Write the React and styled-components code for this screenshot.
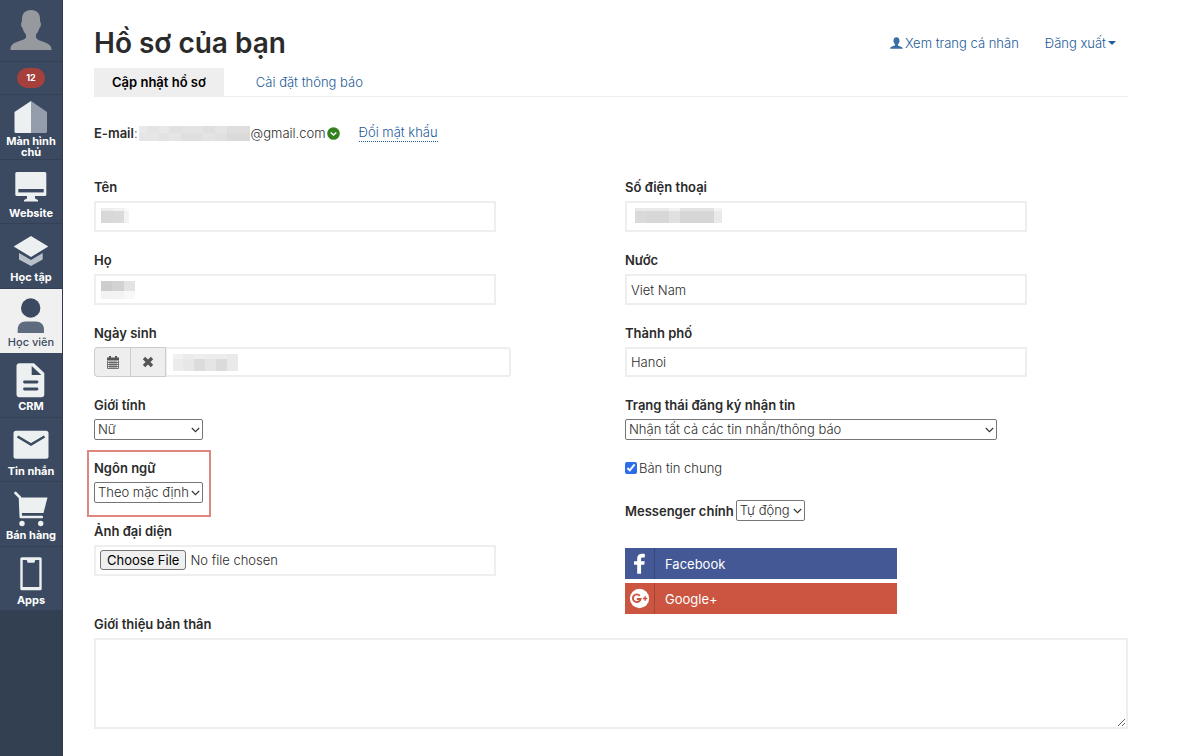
import { useState } from 'react';
import styled, { createGlobalStyle, css } from 'styled-components';

const GlobalStyle = createGlobalStyle`
  *, *::before, *::after {
    box-sizing: border-box;
  }
  body {
    margin: 0;
    background: #fff;
    color: #2b2b2b;
    font-family: Inter, 'Liberation Sans', sans-serif;
    font-size: 13px;
    font-weight: 300;
    line-height: 20px;
  }
  button, input, select, textarea {
    font: inherit;
    color: inherit;
  }
  a {
    color: #245c98;
    text-decoration: none;
  }
`;

const Page = styled.div`
  display: flex;
  min-height: 100vh;
`;

const Sidebar = styled.nav`
  flex: 0 0 63px;
  background: #334051;
  border-right: 1px solid #2f3b4c;
`;

const Menu = styled.ul`
  margin: 0;
  padding: 0;
  list-style: none;
`;

const MenuItem = styled.li`
  height: 64px;
  background: #3b4a60;
  border-bottom: 1px solid #344155;

  &:nth-child(odd) {
    height: 65px;
  }
  ${(props) =>
    props.$active &&
    css`
      background: #f0f0f0;
      border-color: #f0f0f0;
    `}
`;

const MenuLink = styled.a`
  display: flex;
  flex-direction: column;
  align-items: center;
  padding-top: 6px;
  color: ${(props) => (props.$active ? '#3b4a60' : '#fff')};
  font-size: 11px;
  font-weight: ${(props) => (props.$active ? 500 : 700)};
  line-height: 11px;
  text-align: center;
`;

const AvatarBox = styled.a`
  display: flex;
  justify-content: center;
  height: 62px;
  padding-top: 9px;
  background: #3b4a60;
  border-bottom: 1px solid #344155;
`;

const BadgeBox = styled.div`
  display: flex;
  align-items: center;
  justify-content: center;
  height: 33px;
  background: #3b4a60;
  border-bottom: 1px solid #344155;
`;

const Badge = styled.a`
  padding: 0 9px;
  border-radius: 10px;
  background: #a6403d;
  color: #fff;
  font-size: 9px;
  font-weight: 700;
  line-height: 20px;
`;

const Main = styled.main`
  flex: 1;
  min-width: 0;
  padding: 24px 72px 28px 31px;
`;

const Header = styled.header`
  display: flex;
  align-items: center;
  justify-content: space-between;
  height: 38px;
`;

const Title = styled.h1`
  margin: 0;
  font-size: 28px;
  font-weight: 600;
  line-height: 38px;
`;

const UserLinks = styled.div`
  display: flex;
  gap: 26px;
  padding-right: 12px;

  a {
    display: flex;
    align-items: center;
    gap: 2px;
  }
`;

const Caret = styled.span`
  border: 4px solid transparent;
  border-top-color: currentColor;
  border-bottom: 0;
`;

const Tabs = styled.nav`
  display: flex;
  margin-top: 6px;
  border-bottom: 1px solid #eee;
`;

const Tab = styled.a`
  padding: 4px 18px;
  margin-right: 14px;
  ${(props) =>
    props.$active &&
    css`
      background: #eee;
      color: #000;
      font-weight: 600;
    `}
`;

const EmailRow = styled.div`
  display: flex;
  align-items: center;
  gap: 1px;
  margin: 26px 0 34px;

  b {
    font-weight: 600;
  }
`;

const PasswordLink = styled.a`
  margin-left: 18px;
  line-height: 17px;
  border-bottom: 1px dotted #245c98;
`;

const Columns = styled.div`
  display: grid;
  grid-template-columns: 1fr 1fr;
  gap: 28px;
`;

const Field = styled.div`
  position: relative;
  margin-bottom: 18px;
`;

const Label = styled.label`
  display: block;
  margin-bottom: 4px;
  font-weight: 600;
`;

const Control = styled.div`
  position: relative;
  width: 80%;
`;

const TextInput = styled.input`
  display: block;
  width: 100%;
  height: ${(props) => (props.$short ? 30 : 31)}px;
  padding: 0 4px;
  border: 2px solid #eee;
  background: #fff;
`;

const DateGroup = styled.div`
  display: flex;
  width: 83%;
`;

const DateButton = styled.button`
  display: flex;
  align-items: center;
  justify-content: center;
  width: 36px;
  padding: 0;
  border: 1px solid #ccc;
  background: #eee;
  color: #555;

  &:first-child {
    border-right: 0;
    border-radius: 4px 0 0 4px;
  }
`;

const DateInputBox = styled.div`
  position: relative;
  flex: 1;

  input {
    border-left-width: 1px;
    border-radius: 0 3px 3px 0;
  }
`;

const SelectBox = styled.div`
  position: relative;
  width: ${(props) => props.$width};

  svg {
    position: absolute;
    top: 8px;
    right: 3px;
    pointer-events: none;
  }
`;

const NativeSelect = styled.select`
  display: block;
  width: 100%;
  height: 21px;
  padding: 0 12px 0 3px;
  border: 1px solid #767676;
  border-radius: 2px;
  background: #fff;
  line-height: 19px;
  appearance: none;
`;

const FileInput = styled.input`
  display: block;
  width: 80%;
  height: 31px;
  padding: 3px 4px;
  border: 2px solid #eee;
  line-height: 20px;

  &::file-selector-button {
    height: 20px;
    margin-right: 4px;
    padding: 0 6px;
    border: 1px solid #767676;
    border-radius: 3px;
    background: #efefef;
    color: #000;
    font: inherit;
    font-weight: 400;
    line-height: 18px;
  }
`;

// red frame drawn over the language field
const Highlight = styled.span`
  position: absolute;
  top: -8px;
  left: -7px;
  width: 124px;
  height: 67px;
  border: 2px solid #e08681;
  pointer-events: none;
`;

const CheckRow = styled.label`
  display: flex;
  align-items: center;
  gap: 2px;
  margin-bottom: 22px;

  input {
    width: 12px;
    height: 12px;
    margin: 0;
    accent-color: #2b6de8;
  }
`;

const InlineField = styled.div`
  display: flex;
  align-items: center;
  gap: 2px;
  margin-bottom: 27px;

  label {
    margin: 0;
  }
`;

const SocialList = styled.div`
  display: flex;
  flex-direction: column;
  gap: 4px;
`;

const SocialButton = styled.button`
  display: flex;
  align-items: center;
  width: 272px;
  height: 31px;
  padding: 0;
  border: 0;
  background: ${(props) => props.$color};
  color: #fff;
  text-align: left;

  svg {
    flex: none;
    border-right: 1px solid rgba(0, 0, 0, 0.18);
  }
  span {
    padding-left: 10px;
    font-weight: 400;
  }
`;

const Bio = styled.textarea`
  display: block;
  width: 100%;
  height: 91px;
  padding: 6px;
  border: 2px solid #eee;
  resize: both;
`;

const MaskBox = styled.span`
  display: flex;
  ${(props) =>
    props.$over &&
    css`
      position: absolute;
      top: 7px;
      left: 7px;
    `}
`;

// each row is a list of [width, shade] cells
const Mask = ({ rows, over }) => {
  const width = Math.max(...rows.map((r) => r.cells.reduce((sum, c) => sum + c[0], 0)));
  const height = rows.reduce((sum, r) => sum + r.height, 0);
  let y = 0;
  return (
    <MaskBox $over={over}>
      <svg width={width} height={height} shapeRendering="crispEdges" aria-hidden="true">
        {rows.map((row, i) => {
          const top = y;
          let x = 0;
          y += row.height;
          return row.cells.map(([w, fill], j) => {
            const left = x;
            x += w;
            return <rect key={`${i}-${j}`} x={left} y={top} width={w} height={row.height} fill={fill} />;
          });
        })}
      </svg>
    </MaskBox>
  );
};

const emailMask = [
  { height: 7, cells: [[8, '#e9e9e9'], [12, '#e4e4e4'], [10, '#e8e8e8'], [12, '#e1e1e1'], [22, '#e3e3e3'], [12, '#dfdfdf'], [12, '#e4e4e4'], [23, '#dedede']] },
  { height: 8, cells: [[8, '#e5e5e5'], [12, '#e6e6e6'], [10, '#e2e2e2'], [12, '#e5e5e5'], [22, '#dfdfdf'], [12, '#e3e3e3'], [12, '#e0e0e0'], [23, '#dadada']] },
];
const firstNameMask = [
  { height: 3, cells: [[12, '#ececec'], [12, '#f1f1f1'], [4, '#fafafa']] },
  { height: 12, cells: [[12, '#d8d8d8'], [11, '#dadada'], [5, '#f3f3f3']] },
];
const lastNameMask = [
  { height: 10, cells: [[11, '#cdcdcd'], [12, '#d2d2d2'], [11, '#e3e3e3']] },
  { height: 8, cells: [[11, '#f2f2f2'], [12, '#f3f3f3'], [11, '#f8f8f8']] },
];
const dateMask = [
  { height: 5, cells: [[10, '#f1f1f1'], [11, '#ebebeb'], [11, '#efefef'], [22, '#ececec'], [11, '#e9e9e9']] },
  { height: 12, cells: [[10, '#ececec'], [11, '#e7e7e7'], [11, '#dcdcdc'], [11, '#e5e5e5'], [11, '#dbdbdb'], [11, '#e9e9e9']] },
];
const phoneMask = [
  { height: 3, cells: [[3, '#fff'], [34, '#e9e9e9'], [11, '#f2f2f2'], [34, '#e3e3e3'], [8, '#f3f3f3']] },
  { height: 12, cells: [[3, '#fff'], [12, '#dadada'], [22, '#d7d7d7'], [11, '#e0e0e0'], [34, '#d6d6d6'], [8, '#eaeaea']] },
];

const HomeIcon = () => (
  <svg width="36" height="35" viewBox="0 0 36 35">
    <path d="M18 0v32H3a1.500 1.500 0 0 1-1.500-1.500V11z" fill="#ecf0f1" />
    <path d="M18 0v32h14.500A1.500 1.500 0 0 0 34 30.500V11z" fill="#949dac" />
  </svg>
);

const WebsiteIcon = () => (
  <svg width="36" height="42" viewBox="0 0 36 42" fill="#ecf0f1">
    <rect x="2.300" y="6" width="31" height="24" rx="1.500" />
    <path d="M14 30h8v2.500l3 1.500v1.500H11V34l3-1.500z" />
    <rect x="5.300" y="23" width="25.400" height="3.400" fill="#3b4a60" />
  </svg>
);

const LearnIcon = () => (
  <svg width="36" height="42" viewBox="0 0 36 42">
    <path d="M6 23l12 7 11.700-7v6.500L18 36 6 29.500z" fill="#b9c0c9" />
    <path d="M18 6l17.300 10.500L18 27 .7 16.500z" fill="#ecf0f1" />
  </svg>
);

const StudentIcon = () => (
  <svg width="36" height="42" viewBox="0 0 36 42">
    <circle cx="17.700" cy="13" r="9.700" fill="#3b4a60" />
    <path d="M4.700 38v-3.500c0-5 3-8 8-8h10c5 0 8.300 3 8.300 8V38z" fill="#5f6b7f" />
  </svg>
);

const CrmIcon = () => (
  <svg width="36" height="42" viewBox="0 0 36 42">
    <path d="M6.500 4.300h14.500L31.300 14v21.300a3 3 0 0 1-3 3H6.500a3 3 0 0 1-3-3v-28a3 3 0 0 1 3-3z" fill="#ecf0f1" />
    <path d="M18.700 7v9h9.600z" fill="#3b4a60" />
    <path d="M11.500 23h12.500M11.500 30h12.500" stroke="#3b4a60" strokeWidth="2.800" strokeLinecap="round" />
  </svg>
);

const MailIcon = () => (
  <svg width="36" height="42" viewBox="0 0 36 42">
    <rect x=".5" y="6.700" width="35" height="28" rx="2.500" fill="#ecf0f1" />
    <path d="M4.500 12.500L18 20.500l13.500-8" fill="none" stroke="#3b4a60" strokeWidth="2.600" />
  </svg>
);

const CartIcon = () => (
  <svg width="36" height="42" viewBox="0 0 36 42" fill="#ecf0f1">
    <path d="M7 9.500h27.500L30.500 25H7.500z" />
    <path d="M2.500 5l4.500 4.500.8 19.500h21" fill="none" stroke="#ecf0f1" strokeWidth="2.600" strokeLinecap="round" strokeLinejoin="round" />
    <circle cx="9" cy="35.500" r="2.700" />
    <circle cx="27.700" cy="35.500" r="2.700" />
  </svg>
);

const AppsIcon = () => (
  <svg width="36" height="42" viewBox="0 0 36 42">
    <rect x="7.300" y="4.300" width="21.400" height="33" rx="1.500" fill="#ecf0f1" />
    <path d="M9.700 7h4l1 2.700h6.600l1-2.700h4v27H9.700z" fill="#3b4a60" />
  </svg>
);

const UserIcon = ({ width, height, color }) => (
  <svg width={width} height={height} viewBox="0 0 42 42" preserveAspectRatio="none" fill={color} aria-hidden="true">
    <path d="M21 1c6 0 9 3.500 9 9 0 2 .2 3 .8 4 .6 1.500-.3 4-1.300 5-.8 3-2 5-3.500 6.500v3c1 2.500 4 3 8 4.500 5 2 7.500 3.500 7.500 8V41H.5c0-5 2-6.500 7.500-8.500 4-1.500 7-2 8-4v-3c-1.500-1.500-2.700-3.500-3.500-6.500-1-1-1.900-3.500-1.300-5 .6-1 .8-2 .8-4 0-5.500 3-9 9-9z" />
  </svg>
);

const VerifiedIcon = () => (
  <svg width="13" height="13" viewBox="0 0 13 13" aria-hidden="true">
    <circle cx="6.500" cy="6.500" r="6.300" fill="#35801f" />
    <path d="M3.700 5.500l2.800 2.500 2.800-2.500" fill="none" stroke="#fff" strokeWidth="1.500" />
  </svg>
);

const CalendarIcon = () => (
  <svg width="12" height="13" viewBox="0 0 12 13" fill="none" stroke="#555" aria-hidden="true">
    <path d="M0 2.500h12M0 3.500h12M3 0v2M9 0v2" strokeWidth="2" />
    <path d="M.5 5v7.500h11V5M.5 6.500h11M.5 8.500h11M.5 10.500h11M3 5v7M5 5v7M7 5v7M9 5v7" strokeWidth="1" opacity=".8" />
  </svg>
);

const RemoveIcon = () => (
  <svg width="12" height="12" viewBox="0 0 12 12" aria-hidden="true">
    <path d="M2 2l8 8M10 2l-8 8" stroke="#555" strokeWidth="3.400" />
  </svg>
);

const FacebookIcon = () => (
  <svg width="30" height="31" viewBox="0 0 30 31" fill="#fff" aria-hidden="true">
    <path d="M20.500 5.800v3.400h-2.300c-1.200 0-1.600.6-1.600 1.600v2.400h3.800l-.5 3.500h-3.300V26h-4v-9.300H9.300v-3.500h3.300v-2.800c0-3.200 1.900-4.900 4.900-4.900 1.300 0 2.400.1 3 .3z" />
  </svg>
);

const GooglePlusIcon = () => (
  <svg width="30" height="31" viewBox="0 0 30 31" fill="none" aria-hidden="true">
    <circle cx="15" cy="15.500" r="10" fill="#fff" />
    <path d="M15.300 12.700a4 4 0 1 0 .8 3.300h-3.900" stroke="#cb5540" strokeWidth="2" />
    <path d="M20.800 13.300v4.600M18.500 15.600h4.600" stroke="#cb5540" strokeWidth="1.500" />
  </svg>
);

const menu = [
  { label: 'Màn hình chủ', icon: HomeIcon },
  { label: 'Website', icon: WebsiteIcon },
  { label: 'Học tập', icon: LearnIcon },
  { label: 'Học viên', icon: StudentIcon, active: true },
  { label: 'CRM', icon: CrmIcon },
  { label: 'Tin nhắn', icon: MailIcon },
  { label: 'Bán hàng', icon: CartIcon },
  { label: 'Apps', icon: AppsIcon },
];

const TextField = ({ id, label, mask, short, ...rest }) => (
  <Field>
    <Label htmlFor={id}>{label}</Label>
    <Control>
      <TextInput id={id} type="text" $short={short} {...rest} />
      {mask && <Mask over rows={mask} />}
    </Control>
  </Field>
);

const Select = ({ id, width, options }) => (
  <SelectBox $width={width}>
    <NativeSelect id={id}>
      {options.map((option) => (
        <option key={option}>{option}</option>
      ))}
    </NativeSelect>
    <svg width="9" height="6" viewBox="0 0 9 6" fill="none" stroke="#333" strokeWidth="1.100" aria-hidden="true">
      <path d="M.8 1l3.700 3.700L8.200 1" />
    </svg>
  </SelectBox>
);

const SelectField = ({ label, children, ...rest }) => (
  <Field>
    <Label htmlFor={rest.id}>{label}</Label>
    <Select {...rest} />
    {children}
  </Field>
);

const App = () => {
  const [general, setGeneral] = useState(true);

  return (
    <>
      <GlobalStyle />
      <Page>
        <Sidebar>
          <AvatarBox href="#profile" aria-label="Avatar">
            <UserIcon width={42} height={42} color="#96999d" />
          </AvatarBox>
          <BadgeBox>
            <Badge href="#notifications">12</Badge>
          </BadgeBox>
          <Menu>
            {menu.map(({ label, icon: Icon, active }) => (
              <MenuItem key={label} $active={active}>
                <MenuLink href="#menu" $active={active}>
                  <Icon />
                  {label}
                </MenuLink>
              </MenuItem>
            ))}
          </Menu>
        </Sidebar>
        <Main>
          <Header>
            <Title>Hồ sơ của bạn</Title>
            <UserLinks>
              <a href="#view">
                <UserIcon width={13} height={12} color="#3a6ea5" />
                Xem trang cá nhân
              </a>
              <a href="#logout">
                Đăng xuất
                <Caret />
              </a>
            </UserLinks>
          </Header>
          <Tabs>
            <Tab href="#update" $active>
              Cập nhật hồ sơ
            </Tab>
            <Tab href="#settings">Cài đặt thông báo</Tab>
          </Tabs>
          <EmailRow>
            <span>
              <b>E-mail</b>:
            </span>
            <Mask rows={emailMask} />
            @gmail.com
            <VerifiedIcon />
            <PasswordLink href="#password">Đổi mật khẩu</PasswordLink>
          </EmailRow>
          <form>
            <Columns>
              <div>
                <TextField id="firstName" label="Tên" mask={firstNameMask} />
                <TextField id="lastName" label="Họ" mask={lastNameMask} />
                <Field>
                  <Label htmlFor="birthday">Ngày sinh</Label>
                  <DateGroup>
                    <DateButton type="button" aria-label="Calendar">
                      <CalendarIcon />
                    </DateButton>
                    <DateButton type="button" aria-label="Clear">
                      <RemoveIcon />
                    </DateButton>
                    <DateInputBox>
                      <TextInput id="birthday" type="text" $short />
                      <Mask over rows={dateMask} />
                    </DateInputBox>
                  </DateGroup>
                </Field>
                <SelectField id="gender" label="Giới tính" width="109px" options={['Nữ', 'Nam']} />
                <SelectField id="language" label="Ngôn ngữ" width="109px" options={['Theo mặc định']}>
                  <Highlight />
                </SelectField>
                <Field>
                  <Label htmlFor="avatar">Ảnh đại diện</Label>
                  <FileInput id="avatar" type="file" />
                </Field>
              </div>
              <div>
                <TextField id="phone" label="Số điện thoại" mask={phoneMask} />
                <TextField id="country" label="Nước" defaultValue="Viet Nam" />
                <TextField id="city" label="Thành phố" defaultValue="Hanoi" short />
                <SelectField
                  id="status"
                  label="Trạng thái đăng ký nhận tin"
                  width="74%"
                  options={['Nhận tất cả các tin nhắn/thông báo']}
                />
                <CheckRow>
                  <input type="checkbox" checked={general} onChange={(e) => setGeneral(e.target.checked)} />
                  Bản tin chung
                </CheckRow>
                <InlineField>
                  <Label htmlFor="messenger">Messenger chính</Label>
                  <Select id="messenger" width="69px" options={['Tự động']} />
                </InlineField>
                <SocialList>
                  <SocialButton type="button" $color="#435894">
                    <FacebookIcon />
                    <span>Facebook</span>
                  </SocialButton>
                  <SocialButton type="button" $color="#cb5540">
                    <GooglePlusIcon />
                    <span>Google+</span>
                  </SocialButton>
                </SocialList>
              </div>
            </Columns>
            <Label htmlFor="bio">Giới thiệu bản thân</Label>
            <Bio id="bio" />
          </form>
        </Main>
      </Page>
    </>
  );
};

export default App;
